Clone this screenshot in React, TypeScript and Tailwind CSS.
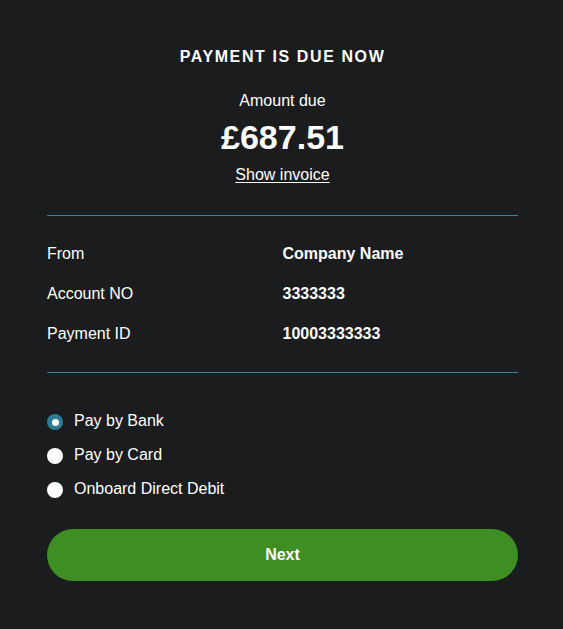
import React from "react";

const details = [
  { label: "From", value: "Company Name" },
  { label: "Account NO", value: "3333333" },
  { label: "Payment ID", value: "10003333333" },
];

const options = ["Pay by Bank", "Pay by Card", "Onboard Direct Debit"];

const Radio: React.FC<{ checked?: boolean }> = ({ checked }) =>
  checked ? (
    <span className="flex items-center justify-center w-4 h-4 rounded-full bg-[#2e7c94] shrink-0">
      <span className="w-[7px] h-[7px] rounded-full bg-white" />
    </span>
  ) : (
    <span className="w-4 h-4 rounded-full bg-white shrink-0" />
  );

export default function App() {
  return (
    <div
      className="w-[563px] min-h-[629px] bg-[#1b1c1e] text-white pl-[47px] pr-[45px] pt-[45px] pb-[48px]"
      style={{ fontFamily: '"Liberation Sans", Arial, sans-serif' }}
    >
      <div className="flex flex-col items-center">
        <h2 className="text-base leading-6 font-bold tracking-[0.1em]">PAYMENT IS DUE NOW</h2>
        <p className="mt-[20px] text-base leading-6">Amount due</p>
        <p className="mt-1 text-[34px] leading-10 font-bold">£687.51</p>
        <a className="mt-[6px] text-base leading-6 underline underline-offset-2">Show invoice</a>
      </div>

      <div className="mt-[28px] h-px bg-[#2f87a1]" />

      <div className="flex flex-col gap-4 pt-[26px] pb-[26px]">
        {details.map((d) => (
          <div key={d.label} className="grid grid-cols-2 text-base leading-6">
            <span>{d.label}</span>
            <span className="font-bold">{d.value}</span>
          </div>
        ))}
      </div>

      <div className="h-px bg-[#2f87a1]" />

      <div className="flex flex-col gap-[10px] pt-[37px]">
        {options.map((o, i) => (
          <label key={o} className="flex items-center gap-[11px] h-6 text-base leading-6">
            <Radio checked={i === 0} />
            <span className="relative -top-px">{o}</span>
          </label>
        ))}
      </div>

      <button className="mt-[27px] w-full h-[52px] rounded-full bg-[#3d8e23] text-white font-bold text-base">
        Next
      </button>
    </div>
  );
}
